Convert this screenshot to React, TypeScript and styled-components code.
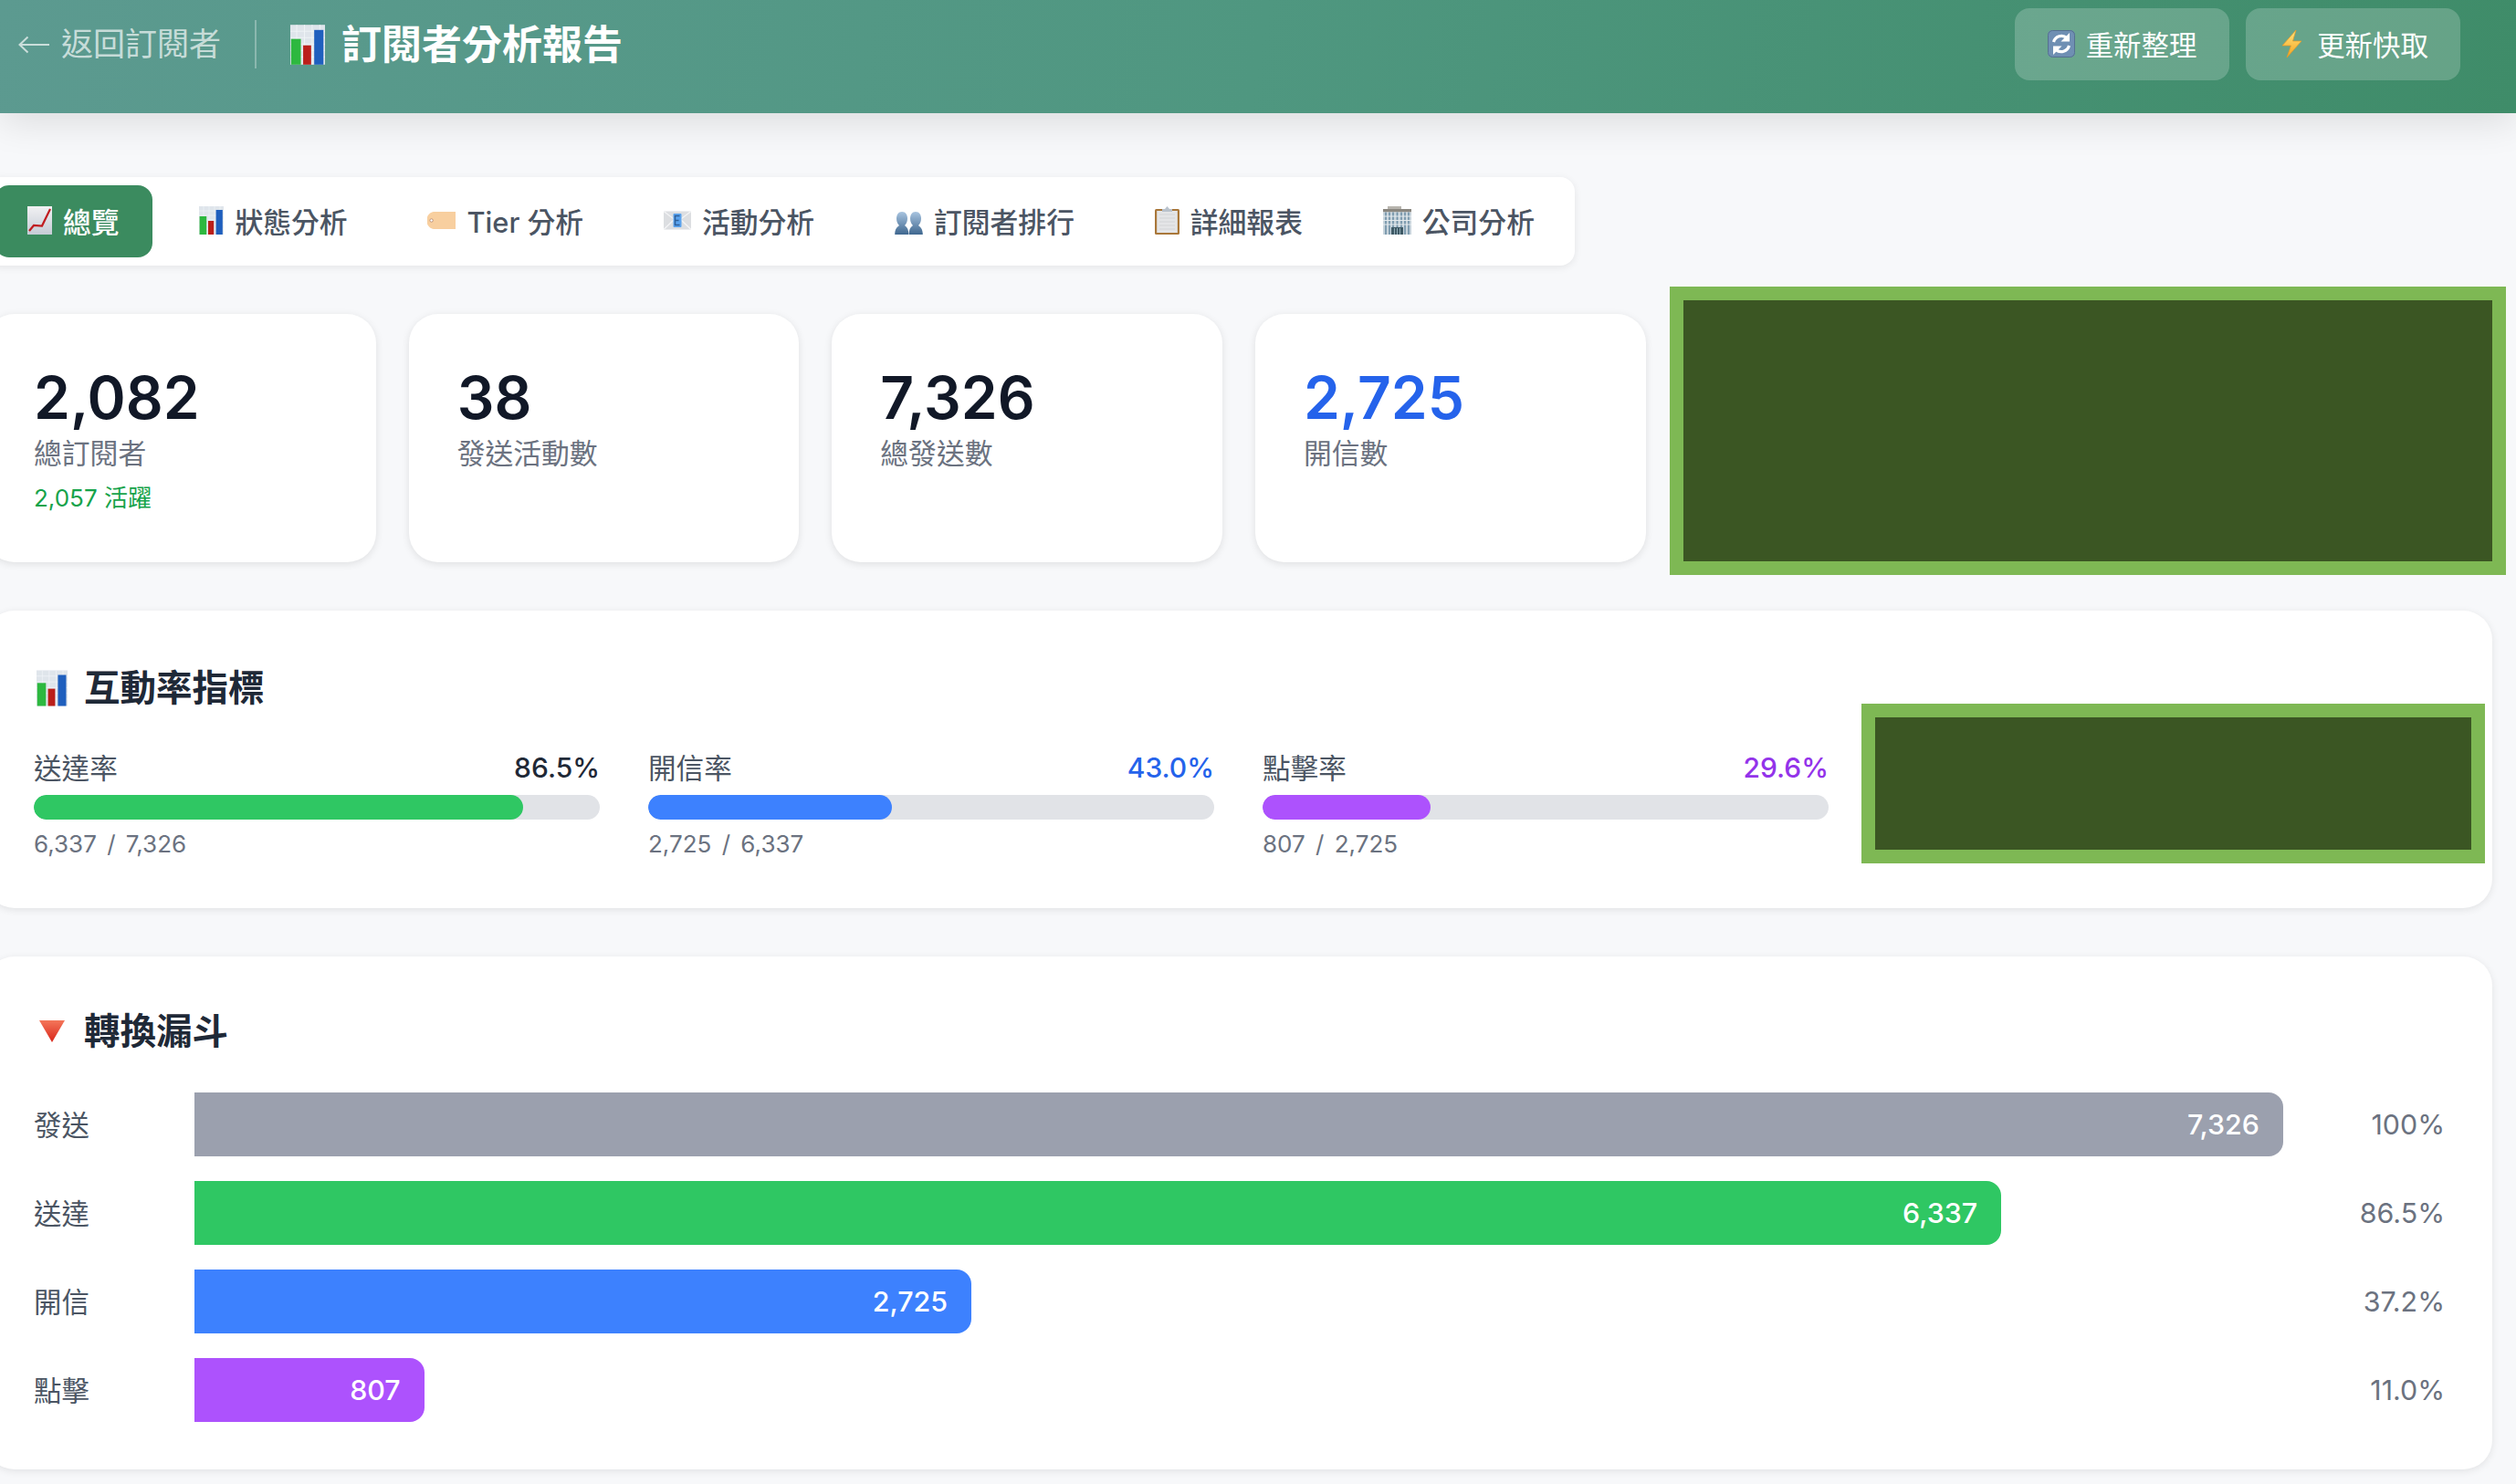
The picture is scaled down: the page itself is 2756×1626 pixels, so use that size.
import React from "react";
import styled, { createGlobalStyle } from "styled-components";

const Global = createGlobalStyle`
  html, body { margin: 0; padding: 0; background: #f7f8fa; overflow: hidden; }
  body {
    font-family: Inter, "Noto Sans CJK TC", sans-serif;
    width: 2756px;
    height: 1626px;
  }
  * { box-sizing: border-box; }
`;

const Page = styled.div`
  width: 2756px;
  height: 1626px;
  overflow: hidden;
`;

const Header = styled.header`
  height: 124px;
  padding: 9px 61px 0 20px;
  display: flex;
  justify-content: space-between;
  align-items: flex-start;
  background: linear-gradient(100deg, #5c9a90 0%, #4f9780 50%, #3f8c69 100%);
  box-shadow: 0 8px 40px rgba(0, 0, 0, 0.12);
  color: #fff;
`;

const HeaderLeft = styled.div`
  height: 79px;
  display: flex;
  align-items: center;
`;

const BackLink = styled.span`
  display: flex;
  align-items: center;
  gap: 13px;
  font-size: 35px;
  line-height: 1;
  color: rgba(255, 255, 255, 0.68);
  white-space: nowrap;
`;

const Divider = styled.span`
  width: 2px;
  height: 53px;
  margin: 0 37px 0 37px;
  background: rgba(255, 255, 255, 0.3);
`;

const Title = styled.h1`
  margin: 0;
  display: flex;
  align-items: center;
  gap: 18px;
  font-size: 44px;
  font-weight: 700;
  line-height: 1;
  white-space: nowrap;
`;

const HeaderActions = styled.div`
  display: flex;
  gap: 18px;
`;

const HeaderButton = styled.div`
  width: 235px;
  height: 79px;
  padding-bottom: 2px;
  display: flex;
  align-items: center;
  justify-content: center;
  gap: 12px;
  border-radius: 16px;
  background: rgba(255, 255, 255, 0.2);
  font-size: 30.4px;
  white-space: nowrap;
`;

const Content = styled.main`
  width: 2746px;
  margin-left: -16px;
  padding-top: 70px;
  display: flex;
  flex-direction: column;
  gap: 53px;
`;

const TabBar = styled.nav`
  width: 1741px;
  height: 97px;
  padding: 9px 8px 9px 10px;
  display: flex;
  justify-content: space-between;
  background: #fff;
  border-radius: 16px;
  box-shadow: 0 2px 8px rgba(0, 0, 0, 0.08);
`;

const Tab = styled.div<{ $active?: boolean }>`
  height: 79px;
  padding: 0 36px 2px;
  display: flex;
  align-items: center;
  gap: 12px;
  border-radius: 16px;
  font-size: 30.8px;
  font-weight: 500;
  white-space: nowrap;
  color: ${(p) => (p.$active ? "#fff" : "#4b5563")};
  background: ${(p) => (p.$active ? "#3b8b5f" : "transparent")};
`;

const CardGrid = styled.section`
  display: grid;
  grid-template-columns: repeat(6, 1fr);
  gap: 36px;
  height: 272px;
`;

const Card = styled.div`
  padding: 55px 53px 0;
  background: #fff;
  border-radius: 32px;
  box-shadow: 0 2px 8px rgba(0, 0, 0, 0.1);
`;

const CardValue = styled.div<{ $color?: string }>`
  font-size: 64px;
  line-height: 74px;
  font-weight: 600;
  color: ${(p) => p.$color ?? "#111827"};
`;

const CardLabel = styled.div`
  margin-top: 1px;
  font-size: 30.8px;
  line-height: 46px;
  color: #6b7280;
`;

const CardNote = styled.div`
  margin-top: 6px;
  font-size: 26px;
  line-height: 40px;
  color: #16a34a;
`;

const MaskSlot = styled.div<{ $span?: number }>`
  position: relative;
  grid-column: span ${(p) => p.$span ?? 1};
`;

const Mask = styled.div<{ $inset: string }>`
  position: absolute;
  inset: ${(p) => p.$inset};
  background: #3b5623;
  border: 15px solid #7eb854;
`;

const Panel = styled.section<{ $height: number }>`
  height: ${(p) => p.$height}px;
  padding: 0 52px 0 53px;
  background: #fff;
  border-radius: 32px;
  box-shadow: 0 2px 8px rgba(0, 0, 0, 0.09);
`;

const PanelTitle = styled.h2<{ $top: number; $bottom: number }>`
  margin: 0 0 ${(p) => p.$bottom}px;
  padding: ${(p) => p.$top}px 0 0 3px;
  height: ${(p) => p.$top + 60}px;
  display: flex;
  align-items: center;
  gap: 18px;
  font-size: 39.5px;
  line-height: 60px;
  font-weight: 700;
  color: #1f2937;
`;

const RateGrid = styled.div`
  display: grid;
  grid-template-columns: repeat(4, 620px);
  gap: 53px;
`;

const RateHead = styled.div`
  display: flex;
  justify-content: space-between;
  align-items: center;
  height: 40px;
  margin-bottom: 10px;
`;

const RateName = styled.span`
  padding-bottom: 3px;
  font-size: 30.6px;
  color: #4b5563;
`;

const RateValue = styled.span<{ $color: string }>`
  font-size: 30px;
  font-weight: 500;
  color: ${(p) => p.$color};
`;

const Track = styled.div`
  height: 27px;
  border-radius: 14px;
  background: #e1e3e7;
  overflow: hidden;
`;

const TrackFill = styled.div<{ $color: string }>`
  height: 100%;
  border-radius: 14px;
  background: ${(p) => p.$color};
`;

const RateDetail = styled.div`
  margin-top: 11px;
  font-size: 26px;
  line-height: 32px;
  word-spacing: 4px;
  color: #6b7280;
`;

const FunnelRows = styled.div`
  display: flex;
  flex-direction: column;
  gap: 27px;
`;

const FunnelRow = styled.div`
  height: 70px;
  display: grid;
  grid-template-columns: 176px 2288px 1fr;
  align-items: center;
`;

const FunnelLabel = styled.span`
  padding-bottom: 3px;
  font-size: 30.4px;
  color: #4b5563;
`;

const FunnelBar = styled.div<{ $color: string }>`
  height: 70px;
  padding-right: 26px;
  display: flex;
  align-items: center;
  justify-content: flex-end;
  border-radius: 0 16px 16px 0;
  background: ${(p) => p.$color};
  color: #fff;
  font-size: 30.4px;
  font-weight: 500;
`;

const FunnelPercent = styled.span`
  text-align: right;
  font-size: 30.4px;
  color: #6b7280;
`;

type IconProps = { w?: number; h?: number };

const BackArrow = () => (
  <svg width="34" height="20" viewBox="0 0 34 20" style={{ flex: "none" }}>
    <path d="M34 10H1.500M10.500 1.500L1.500 10L10.500 18.500" fill="none" stroke="currentColor" strokeWidth="2" />
  </svg>
);

const BarChart = ({ w = 27, h = 31 }: IconProps) => (
  <svg width={w} height={h} viewBox="0 0 27 31" style={{ flex: "none" }}>
    <rect width="27" height="31" fill="#dfe5eb" />
    <path d="M0 5h27M0 10h27M0 15h27M0 20h27M0 25h27M5 0v31M11 0v31M17 0v31M23 0v31" stroke="#f2f5f8" strokeWidth="0.6" />
    <rect x="0.6" y="11" width="7.6" height="20" fill="#2db83f" />
    <rect x="10" y="16" width="6.2" height="15" fill="#bb1f1a" />
    <rect x="18.6" y="4" width="7.2" height="27" fill="#1f5fbe" />
  </svg>
);

const ChartUp = () => (
  <svg width="27" height="31" viewBox="0 0 27 31" style={{ flex: "none" }}>
    <defs>
      <linearGradient id="chartCard" x1="0" y1="0" x2="0" y2="1">
        <stop offset="0" stopColor="#f1f1f3" />
        <stop offset="1" stopColor="#c6ccd6" />
      </linearGradient>
    </defs>
    <rect width="27" height="31" fill="url(#chartCard)" />
    <path d="M2 27L7 21L16 21.5L25 3" fill="none" stroke="#c01c20" strokeWidth="2.2" />
  </svg>
);

const TagIcon = () => (
  <svg width="31" height="31" viewBox="0 0 31 31" style={{ flex: "none" }}>
    <path d="M7 6H31V25H7C4 25 0 21 0 19V12C0 10 4 6 7 6Z" fill="#f8cf9f" />
    <circle cx="4.6" cy="15.5" r="1.7" fill="#fff" stroke="#b98a6e" strokeWidth="0.9" />
  </svg>
);

const EnvelopeIcon = () => (
  <svg width="30" height="31" viewBox="0 0 30 31" style={{ flex: "none" }}>
    <rect y="5.5" width="30" height="20" fill="#dcdee1" />
    <path d="M0 5.5L15 17L30 5.5M0 25.5L12 14M30 25.5L18 14" fill="none" stroke="#f4f5f6" strokeWidth="1.3" />
    <rect x="10.5" y="8" width="9" height="15" rx="1" fill="#5ba3ee" />
    <path d="M17.5 10.5h-5v10h5M12.5 15.5h4" fill="none" stroke="#2d5f9a" strokeWidth="1.5" />
  </svg>
);

const BustsIcon = () => (
  <svg width="31" height="31" viewBox="0 0 31 31" style={{ flex: "none" }}>
    <defs>
      <linearGradient id="bust" x1="0" y1="0" x2="0" y2="1">
        <stop offset="0" stopColor="#a8c4e0" />
        <stop offset="1" stopColor="#3f678f" />
      </linearGradient>
    </defs>
    <g transform="translate(0 6)" fill="url(#bust)">
      <path d="M8 0C12 0 14 3.500 14 7.500C14 11 12.500 13.500 11 15C13.500 17 15.300 19 15.300 25H0.200C0.200 19 2.500 17 5 15C3.500 13.500 2 11 2 7.500C2 3.500 4 0 8 0Z" />
      <path d="M23 0C27 0 29 3.500 29 7.500C29 11 27.500 13.500 26 15C28.500 17 30.800 19 30.800 25H15.700C15.700 19 17.500 17 20 15C18.500 13.500 17 11 17 7.500C17 3.500 19 0 23 0Z" />
    </g>
  </svg>
);

const ClipboardIcon = () => (
  <svg width="27" height="31" viewBox="0 0 27 31" style={{ flex: "none" }}>
    <rect y="3" width="27" height="28" rx="1.5" fill="#a9773a" />
    <rect x="2.2" y="5" width="22.6" height="24" fill="#e4e5e7" />
    <path d="M5 9h17M5 13h17M5 17h17M5 21h17M5 25h17" stroke="#d3d4d7" strokeWidth="1" />
    <path d="M8 6V3H11L13.500 0L16 3H19V6Z" fill="#b9c2cc" />
  </svg>
);

const BuildingIcon = () => (
  <svg width="31" height="31" viewBox="0 0 31 31" style={{ flex: "none" }}>
    <rect x="5" width="15" height="3.500" fill="#b7b4ae" />
    <rect y="3" width="31" height="3.500" fill="#8a8780" />
    <rect y="6.500" width="31" height="24.500" fill="#c8d4dc" />
    <path d="M3 6.500v24.500M7 6.500v24.500M11 6.500v24.500M15.500 6.500v24.500M20 6.500v24.500M24 6.500v24.500M28 6.500v24.500" stroke="#6f8fa6" strokeWidth="1.6" />
    <path d="M0 11h31M0 15.500h31M0 20h31" stroke="#e6ebee" strokeWidth="1" />
    <rect x="9" y="23" width="13" height="8" fill="#3f5a66" />
    <path d="M12.500 24v7M15.500 24v7M18.500 24v7" stroke="#a5c0cc" strokeWidth="0.8" />
  </svg>
);

const RefreshIcon = () => (
  <svg width="30" height="30" viewBox="0 0 30 30" style={{ flex: "none" }}>
    <rect width="30" height="30" rx="5" fill="#6f8fb3" />
    <rect x="0.500" y="0.500" width="29" height="29" rx="5" fill="none" stroke="#55708f" />
    <path d="M6.500 13A9 9 0 0 1 21 8.500" fill="none" stroke="#fff" strokeWidth="3.200" />
    <path d="M24 3V12.500H14.500Z" fill="#fff" />
    <path d="M23.500 17A9 9 0 0 1 9 21.500" fill="none" stroke="#fff" strokeWidth="3.200" />
    <path d="M6 27V17.500H15.500Z" fill="#fff" />
  </svg>
);

const BoltIcon = () => (
  <svg width="31" height="30" viewBox="-4 0 31 30" style={{ flex: "none" }}>
    <defs>
      <linearGradient id="bolt" x1="0" y1="0" x2="0" y2="1">
        <stop offset="0" stopColor="#ffe680" />
        <stop offset="1" stopColor="#f5a31e" />
      </linearGradient>
    </defs>
    <path d="M16 0L1 17H10.500L6 30L22 12H12.500Z" fill="url(#bolt)" stroke="#eb9a22" strokeWidth="0.7" />
  </svg>
);

const FunnelIcon = () => (
  <svg width="34" height="24" viewBox="0 0 34 24" style={{ flex: "none" }}>
    <defs>
      <linearGradient id="tri" x1="0" y1="0" x2="0" y2="1">
        <stop offset="0" stopColor="#f4765a" />
        <stop offset="1" stopColor="#d9261a" />
      </linearGradient>
    </defs>
    <path d="M3 0H31L17 24Z" fill="url(#tri)" />
  </svg>
);

const tabs: { label: string; icon: React.ReactNode; active?: boolean }[] = [
  { label: "總覽", icon: <ChartUp />, active: true },
  { label: "狀態分析", icon: <BarChart /> },
  { label: "Tier 分析", icon: <TagIcon /> },
  { label: "活動分析", icon: <EnvelopeIcon /> },
  { label: "訂閱者排行", icon: <BustsIcon /> },
  { label: "詳細報表", icon: <ClipboardIcon /> },
  { label: "公司分析", icon: <BuildingIcon /> },
];

const rates = [
  { name: "送達率", value: "86.5%", detail: "6,337 / 7,326", width: 86.5, text: "#1f2937", bar: "#2fc763" },
  { name: "開信率", value: "43.0%", detail: "2,725 / 6,337", width: 43, text: "#2563eb", bar: "#3d81fe" },
  { name: "點擊率", value: "29.6%", detail: "807 / 2,725", width: 29.6, text: "#9333ea", bar: "#ad52fd" },
];

const funnel = [
  { label: "發送", value: "7,326", percent: "100%", width: 100, color: "#9ba0ae" },
  { label: "送達", value: "6,337", percent: "86.5%", width: 86.5, color: "#2fc763" },
  { label: "開信", value: "2,725", percent: "37.2%", width: 37.2, color: "#3d81fe" },
  { label: "點擊", value: "807", percent: "11.0%", width: 11, color: "#ad52fd" },
];

export default function App() {
  return (
    <Page>
      <Global />
      <Header>
        <HeaderLeft>
          <BackLink>
            <BackArrow />
            返回訂閱者
          </BackLink>
          <Divider />
          <Title>
            <BarChart w={38} h={44} />
            訂閱者分析報告
          </Title>
        </HeaderLeft>
        <HeaderActions>
          <HeaderButton>
            <RefreshIcon />
            重新整理
          </HeaderButton>
          <HeaderButton>
            <BoltIcon />
            更新快取
          </HeaderButton>
        </HeaderActions>
      </Header>
      <Content>
        <TabBar>
          {tabs.map((t) => (
            <Tab key={t.label} $active={t.active}>
              {t.icon}
              {t.label}
            </Tab>
          ))}
        </TabBar>
        <CardGrid>
          <Card>
            <CardValue>2,082</CardValue>
            <CardLabel>總訂閱者</CardLabel>
            <CardNote>2,057 活躍</CardNote>
          </Card>
          <Card>
            <CardValue>38</CardValue>
            <CardLabel>發送活動數</CardLabel>
          </Card>
          <Card>
            <CardValue>7,326</CardValue>
            <CardLabel>總發送數</CardLabel>
          </Card>
          <Card>
            <CardValue $color="#2563eb">2,725</CardValue>
            <CardLabel>開信數</CardLabel>
          </Card>
          <MaskSlot $span={2}>
            <Mask $inset="-30px -15px -14px -10px" />
          </MaskSlot>
        </CardGrid>
        <Panel $height={326}>
          <PanelTitle $top={55} $bottom={37}>
            <BarChart w={34} h={40} />
            互動率指標
          </PanelTitle>
          <RateGrid>
            {rates.map((r) => (
              <div key={r.name}>
                <RateHead>
                  <RateName>{r.name}</RateName>
                  <RateValue $color={r.text}>{r.value}</RateValue>
                </RateHead>
                <Track>
                  <TrackFill $color={r.bar} style={{ width: `${r.width}%` }} />
                </Track>
                <RateDetail>{r.detail}</RateDetail>
              </div>
            ))}
            <MaskSlot>
              <Mask $inset="-50px -46px -5px -17px" />
            </MaskSlot>
          </RateGrid>
        </Panel>
        <Panel $height={562}>
          <PanelTitle $top={52} $bottom={37}>
            <FunnelIcon />
            轉換漏斗
          </PanelTitle>
          <FunnelRows>
            {funnel.map((f) => (
              <FunnelRow key={f.label}>
                <FunnelLabel>{f.label}</FunnelLabel>
                <FunnelBar $color={f.color} style={{ width: `${f.width}%` }}>
                  {f.value}
                </FunnelBar>
                <FunnelPercent>{f.percent}</FunnelPercent>
              </FunnelRow>
            ))}
          </FunnelRows>
        </Panel>
      </Content>
    </Page>
  );
}
